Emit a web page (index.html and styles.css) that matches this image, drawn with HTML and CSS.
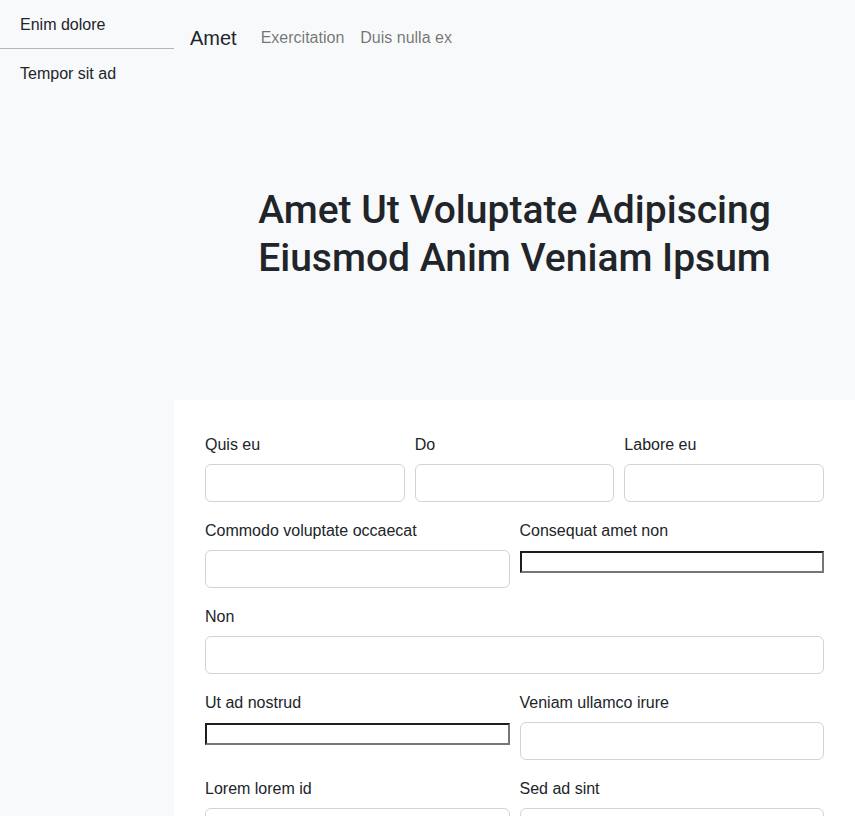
FILE: index.html
```html
<!DOCTYPE html>
<html lang="en">
<head>
<meta charset="utf-8">
<title>Amet</title>
<link rel="stylesheet" href="styles.css">
</head>
<body>
<div class="layout">
  <aside class="sidebar">
    <a class="side-item side-item--bordered" href="#">Enim dolore</a>
    <a class="side-item" href="#">Tempor sit ad</a>
  </aside>
  <main class="main">
    <nav class="navbar">
      <a class="brand" href="#">Amet</a>
      <a class="nav-link" href="#">Exercitation</a>
      <a class="nav-link" href="#">Duis nulla ex</a>
    </nav>
    <section class="hero">
      <h1 class="hero-title">Amet Ut Voluptate Adipiscing Eiusmod Anim Veniam Ipsum</h1>
    </section>
    <section class="form-area">
      <form class="form">
        <div class="row">
          <div class="field"><label class="label">Quis eu</label><input class="control" type="text"></div>
          <div class="field"><label class="label">Do</label><input class="control" type="text"></div>
          <div class="field"><label class="label">Labore eu</label><input class="control" type="text"></div>
        </div>
        <div class="row">
          <div class="field"><label class="label">Commodo voluptate occaecat</label><input class="control" type="text"></div>
          <div class="field"><label class="label">Consequat amet non</label><input class="raw" type="text"></div>
        </div>
        <div class="row">
          <div class="field"><label class="label">Non</label><input class="control" type="text"></div>
        </div>
        <div class="row">
          <div class="field"><label class="label">Ut ad nostrud</label><input class="raw" type="text"></div>
          <div class="field"><label class="label">Veniam ullamco irure</label><input class="control" type="text"></div>
        </div>
        <div class="row">
          <div class="field"><label class="label">Lorem lorem id</label><input class="control" type="text"></div>
          <div class="field"><label class="label">Sed ad sint</label><input class="control" type="text"></div>
        </div>
      </form>
    </section>
  </main>
</div>
</body>
</html>
```

FILE: styles.css
```css
* { box-sizing: border-box; }

html, body {
  margin: 0;
  padding: 0;
}

body {
  font-family: "Liberation Sans", Arial, sans-serif;
  font-size: 16px;
  line-height: 1.5;
  color: #212529;
  background: #f8f9fa;
}

.layout {
  display: flex;
  min-height: 816px;
}

.sidebar {
  width: 174px;
  flex: 0 0 174px;
  display: flex;
  flex-direction: column;
  background: #f8f9fa;
}

.side-item {
  display: block;
  padding: 13px 20px 11px;
  color: #212529;
  text-decoration: none;
  line-height: 24px;
}

.side-item--bordered {
  border-bottom: 1px solid #b3b5b7;
}

.main {
  flex: 1;
  display: flex;
  flex-direction: column;
  min-width: 0;
}

.navbar {
  display: flex;
  align-items: center;
  padding: 18px 16px 16px;
}

.brand {
  font-size: 20px;
  line-height: 30px;
  padding: 5px 0;
  margin-right: 16px;
  color: #212529;
  text-decoration: none;
}

.nav-link {
  padding: 8px;
  line-height: 24px;
  color: rgba(0, 0, 0, 0.55);
  text-decoration: none;
}

.hero {
  padding: 112px 16px 118px;
  text-align: center;
}

.hero-title {
  margin: 0;
  font-family: Roboto, "Liberation Sans", Arial, sans-serif;
  font-size: 39px;
  font-weight: 500;
  line-height: 48px;
}

.form-area {
  background: #ffffff;
  padding: 32px 31px;
  flex: 1;
}

.form {
  display: flex;
  flex-direction: column;
  gap: 16px;
}

.row {
  display: flex;
  gap: 10px;
}

.field {
  flex: 1 1 0;
  min-width: 0;
  display: flex;
  flex-direction: column;
  align-items: stretch;
}

.label {
  display: block;
  padding-top: 1px;
  line-height: 23px;
  margin-bottom: 8px;
}

.control {
  display: block;
  width: 100%;
  height: 38px;
  padding: 6px 12px;
  font: inherit;
  color: #212529;
  background: #fff;
  border: 1px solid #ced4da;
  border-radius: 6px;
}

.raw {
  display: block;
  width: 100%;
  height: 22px;
  margin-top: 1px;
  padding: 1px 2px;
  font-size: 13px;
  background: #fff;
  border-width: 2px;
  border-style: solid;
  border-color: #1e1e1e #767676 #767676 #1e1e1e;
  border-radius: 0;
}
```
